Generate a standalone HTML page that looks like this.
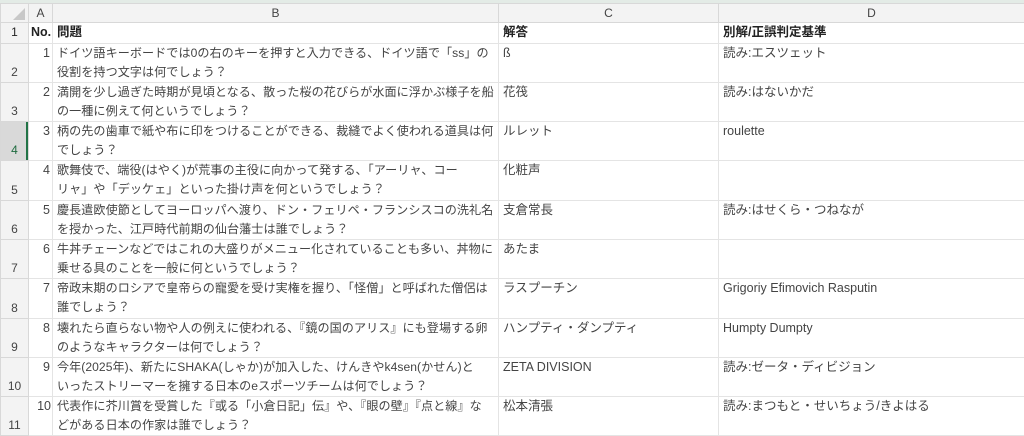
<!DOCTYPE html>
<html><head><meta charset="utf-8"><style>
*{margin:0;padding:0;box-sizing:border-box}
body{width:1024px;height:435px;overflow:hidden;background:#fff;font-family:"Liberation Sans","Noto Sans CJK JP",sans-serif;color:#444;font-size:12.5px;position:relative}
.top{position:absolute;left:0;top:0;width:1024px;height:3px;background:#e3ebe6}
table{position:absolute;left:0;top:3px;border-collapse:collapse;table-layout:fixed;width:1024px}
td{border:1px solid #e4e4e4;padding:0 4px;vertical-align:top;line-height:19.5px;overflow:hidden;white-space:nowrap}
.h td{background:#f3f3f3;color:#444;text-align:center;height:19px;line-height:18px;font-size:12px;border-color:#d8d8d8}
td.rn{background:#f3f3f3;color:#444;text-align:center;vertical-align:bottom;font-size:12px;border-color:#d8d8d8;padding:0}
tr.r td{height:39.3px;line-height:19px;padding-top:0}
tr.r td.q{font-size:12.1px;letter-spacing:0.05px}
tr.b td{height:20px;font-weight:bold;color:#222}
td.a{text-align:right;padding-right:2px}
td.sel{background:#d9d9d9;box-shadow:inset -2px 0 #217346;color:#1e6b3f}
</style></head><body><div class="top"></div>
<table>
<colgroup><col style="width:28px"><col style="width:24px"><col style="width:446px"><col style="width:220px"><col style="width:306px"></colgroup>
<tr class="h"><td style="background:#f3f3f3"><svg width="12" height="12" style="position:relative;top:3px;left:4px"><polygon points="12,0 12,12 0,12" fill="#c8c8c8"/></svg></td><td>A</td><td>B</td><td>C</td><td>D</td></tr>
<tr class="b"><td class="rn" style="vertical-align:middle;font-weight:normal">1</td><td style="padding:0 2px">No.</td><td>問題</td><td>解答</td><td>別解/正誤判定基準</td></tr>
<tr class="r"><td class="rn">2</td><td class="a">1</td><td class="q">ドイツ語キーボードでは0の右のキーを押すと入力できる、ドイツ語で「ss」の<br>役割を持つ文字は何でしょう？</td><td>ß</td><td>読み:エスツェット</td></tr>
<tr class="r"><td class="rn">3</td><td class="a">2</td><td class="q">満開を少し過ぎた時期が見頃となる、散った桜の花びらが水面に浮かぶ様子を船<br>の一種に例えて何というでしょう？</td><td>花筏</td><td>読み:はないかだ</td></tr>
<tr class="r"><td class="rn sel">4</td><td class="a">3</td><td class="q">柄の先の歯車で紙や布に印をつけることができる、裁縫でよく使われる道具は何<br>でしょう？</td><td>ルレット</td><td>roulette</td></tr>
<tr class="r"><td class="rn">5</td><td class="a">4</td><td class="q">歌舞伎で、端役(はやく)が荒事の主役に向かって発する、「アーリャ、コー<br>リャ」や「デッケェ」といった掛け声を何というでしょう？</td><td>化粧声</td><td></td></tr>
<tr class="r"><td class="rn">6</td><td class="a">5</td><td class="q">慶長遣欧使節としてヨーロッパへ渡り、ドン・フェリペ・フランシスコの洗礼名<br>を授かった、江戸時代前期の仙台藩士は誰でしょう？</td><td>支倉常長</td><td>読み:はせくら・つねなが</td></tr>
<tr class="r"><td class="rn">7</td><td class="a">6</td><td class="q">牛丼チェーンなどではこれの大盛りがメニュー化されていることも多い、丼物に<br>乗せる具のことを一般に何というでしょう？</td><td>あたま</td><td></td></tr>
<tr class="r"><td class="rn">8</td><td class="a">7</td><td class="q">帝政末期のロシアで皇帝らの寵愛を受け実権を握り、「怪僧」と呼ばれた僧侶は<br>誰でしょう？</td><td>ラスプーチン</td><td>Grigoriy Efimovich Rasputin</td></tr>
<tr class="r"><td class="rn">9</td><td class="a">8</td><td class="q">壊れたら直らない物や人の例えに使われる、『鏡の国のアリス』にも登場する卵<br>のようなキャラクターは何でしょう？</td><td>ハンプティ・ダンプティ</td><td>Humpty Dumpty</td></tr>
<tr class="r"><td class="rn">10</td><td class="a">9</td><td class="q">今年(2025年)、新たにSHAKA(しゃか)が加入した、けんきやk4sen(かせん)と<br>いったストリーマーを擁する日本のeスポーツチームは何でしょう？</td><td>ZETA DIVISION</td><td>読み:ゼータ・ディビジョン</td></tr>
<tr class="r"><td class="rn">11</td><td class="a" style="padding-right:1px">10</td><td class="q">代表作に芥川賞を受賞した『或る「小倉日記」伝』や、『眼の壁』『点と線』な<br>どがある日本の作家は誰でしょう？</td><td>松本清張</td><td>読み:まつもと・せいちょう/きよはる</td></tr>
</table>
</body></html>
